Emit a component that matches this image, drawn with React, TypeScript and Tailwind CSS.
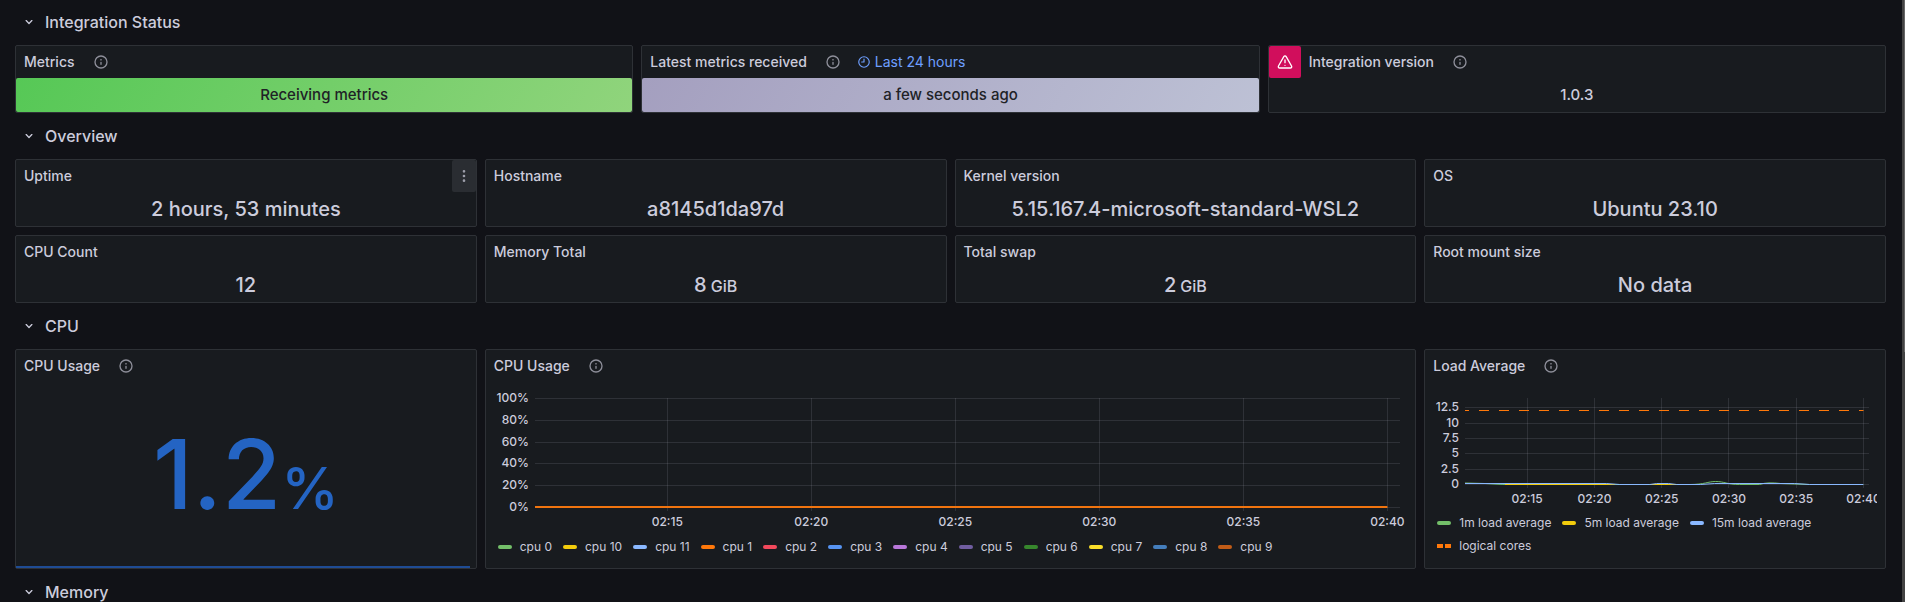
import React from "react";

const GRID = "rgba(204,204,220,0.13)";

function InfoIcon({ className = "" }: { className?: string }) {
  return (
    <svg viewBox="0 0 24 24" className={"h-4 w-4 shrink-0 fill-current " + className} aria-hidden="true">
      <path d="M12,2A10,10,0,1,0,22,12,10.01114,10.01114,0,0,0,12,2Zm0,18a8,8,0,1,1,8-8A8.00917,8.00917,0,0,1,12,20Zm0-8.5a1,1,0,0,0-1,1v3a1,1,0,0,0,2,0v-3A1,1,0,0,0,12,11.5Zm0-4a1.25,1.25,0,1,0,1.25,1.25A1.25,1.25,0,0,0,12,7.5Z" />
    </svg>
  );
}

function Row({ title }: { title: string }) {
  return (
    <h2 className="flex h-[30px] shrink-0 items-center">
      <button type="button" className="flex items-center gap-2 pl-1.5 text-base leading-6 font-medium text-[#ccccdc]">
        <svg viewBox="0 0 24 24" className="h-4 w-4 fill-current" aria-hidden="true">
          <path d="M17,9.17a1,1,0,0,0-1.41,0L12,12.71,8.46,9.17a1,1,0,0,0-1.41,0,1,1,0,0,0,0,1.42l4.24,4.24a1,1,0,0,0,1.42,0L17,10.59A1,1,0,0,0,17,9.17Z" />
        </svg>
        {title}
      </button>
    </h2>
  );
}

type PanelProps = {
  title: string;
  info?: boolean;
  range?: string;
  alert?: boolean;
  menu?: boolean;
  className?: string;
  children: React.ReactNode;
};

function Panel({ title, info, range, alert, menu, className = "", children }: PanelProps) {
  return (
    <section className={"flex min-w-0 flex-col rounded-xs border border-[#2e3136] bg-[#181b1f] " + className}>
      <header className="flex h-8 shrink-0 items-center">
        {alert && (
          <button type="button" aria-label="Panel error" className="flex h-8 w-8 items-center justify-center rounded-xs bg-[#d10e5c] text-white">
            <svg viewBox="0 0 24 24" className="h-4 w-4 fill-current" aria-hidden="true">
              <path d="M12,16a1,1,0,1,0,1,1A1,1,0,0,0,12,16Zm10.67,1.47-8.05-14a3,3,0,0,0-5.24,0l-8,14A3,3,0,0,0,3.94,22H20.06a3,3,0,0,0,2.61-4.53Zm-1.73,2a1,1,0,0,1-.88.51H3.94a1,1,0,0,1-.88-.51,1,1,0,0,1,0-1l8-14a1,1,0,0,1,1.78,0l8.05,14A1,1,0,0,1,20.94,19.49ZM12,8a1,1,0,0,0-1,1v4a1,1,0,0,0,2,0V9A1,1,0,0,0,12,8Z" />
            </svg>
          </button>
        )}
        <h3 className="pl-2 text-sm leading-[22px] font-medium text-[#ccccdc]">{title}</h3>
        {info && (
          <button type="button" aria-label={title + " description"} className="ml-2.5 flex h-8 w-8 items-center justify-center text-[#8e8f9a]">
            <InfoIcon />
          </button>
        )}
        {range && (
          <button type="button" className="flex items-center gap-1 pl-2 text-sm leading-[22px] text-[#6e9fff]">
            <svg viewBox="0 0 24 24" className="h-3.5 w-3.5 fill-current" aria-hidden="true">
              <path d="M12,2A10,10,0,1,0,22,12,10.01177,10.01177,0,0,0,12,2Zm0,18a8,8,0,1,1,8-8A8.00917,8.00917,0,0,1,12,20ZM12,6a.99974.99974,0,0,0-1,1v4H8a1,1,0,0,0,0,2h4a.99974.99974,0,0,0,1-1V7A.99974.99974,0,0,0,12,6Z" />
            </svg>
            {range}
          </button>
        )}
        {menu && (
          <button type="button" aria-label={title + " menu"} className="ml-auto flex h-8 w-6 items-center justify-center rounded-xs bg-[#2a2d32] text-[#9d9eaa]">
            <svg viewBox="0 0 24 24" className="h-4 w-4 fill-current" aria-hidden="true">
              <path d="M12,7a2,2,0,1,0-2-2A2,2,0,0,0,12,7Zm0,10a2,2,0,1,0,2,2A2,2,0,0,0,12,17Zm0-7a2,2,0,1,0,2,2A2,2,0,0,0,12,10Z" />
            </svg>
          </button>
        )}
      </header>
      {children}
    </section>
  );
}

function Stat({ title, value, unit, menu }: { title: string; value: string; unit?: string; menu?: boolean }) {
  return (
    <Panel title={title} menu={menu}>
      <p className="flex h-[34px] items-baseline justify-center gap-1 text-xl leading-[34px] font-medium text-[#ccccdc]">
        {value}
        {unit && <span className="text-base">{unit}</span>}
      </p>
    </Panel>
  );
}

type Tick = { at: number; label: string };

function Axes({ xs, ys, bottom }: { xs: Tick[]; ys: Tick[]; bottom: number }) {
  return (
    <>
      <g stroke={GRID} shapeRendering="crispEdges">
        {ys.map((t) => (
          <line key={t.label} x1="0" x2="100%" y1={t.at + 0.5} y2={t.at + 0.5} />
        ))}
        {xs.map((t) => (
          <line key={t.label} x1={t.at + "%"} x2={t.at + "%"} y1="0" y2={bottom + 4} />
        ))}
      </g>
      <g fill="#ccccdc" className="text-xs font-medium">
        {ys.map((t) => (
          <text key={t.label} x="-6" y={t.at + 4} textAnchor="end">{t.label}</text>
        ))}
        {xs.map((t) => (
          <text key={t.label} x={t.at + "%"} y={bottom + 19} textAnchor="middle">{t.label}</text>
        ))}
      </g>
    </>
  );
}

const times = ["02:15", "02:20", "02:25", "02:30", "02:35", "02:40"];
const cpuX = times.map((label, i) => ({ label, at: 15.3 + i * 16.66 }));
const cpuY = ["100%", "80%", "60%", "40%", "20%", "0%"].map((label, i) => ({ label, at: [0, 22, 44, 65, 87, 109][i] }));
const loadX = times.map((label, i) => ({ label, at: 15.4 + i * 16.66 }));
const loadY = ["12.5", "10", "7.5", "5", "2.5", "0"].map((label, i) => ({ label, at: [9, 25, 40, 55, 71, 86][i] }));

function LegendItem({ name, color, dashed }: { name: string; color: string; dashed?: boolean }) {
  return (
    <li className="flex items-center gap-2">
      {dashed ? (
        <span className="flex w-3.5 justify-between">
          <span className="h-1 w-1.5" style={{ background: color }} />
          <span className="h-1 w-1.5" style={{ background: color }} />
        </span>
      ) : (
        <span className="h-1 w-3.5 rounded-full" style={{ background: color }} />
      )}
      <button type="button">{name}</button>
    </li>
  );
}

const cpus: [string, string][] = [
  ["cpu 0", "#73bf69"],
  ["cpu 10", "#f2cc0c"],
  ["cpu 11", "#8ab8ff"],
  ["cpu 1", "#ff780a"],
  ["cpu 2", "#f2495c"],
  ["cpu 3", "#5794f2"],
  ["cpu 4", "#b877d9"],
  ["cpu 5", "#705da0"],
  ["cpu 6", "#37872d"],
  ["cpu 7", "#fade2a"],
  ["cpu 8", "#447ebc"],
  ["cpu 9", "#c15c17"],
];

export default function App() {
  return (
    <div className="flex h-screen overflow-hidden bg-[#111217] font-['Inter',sans-serif] text-[#ccccdc]">
      <main className="flex min-w-0 flex-1 flex-col gap-2 pt-[7px] pr-4 pl-[15px]">
        <Row title="Integration Status" />
        <div className="grid shrink-0 grid-cols-3 gap-2">
          <Panel title="Metrics" info>
            <p className="h-[34px] rounded-xs bg-[linear-gradient(120deg,#56c856,#90d47c)] text-center text-[15px] leading-[34px] font-medium text-[#202226]">Receiving metrics</p>
          </Panel>
          <Panel title="Latest metrics received" info range="Last 24 hours">
            <p className="h-[34px] rounded-xs bg-[linear-gradient(120deg,#a49fbf,#bdc1d5)] text-center text-[15px] leading-[34px] font-medium text-[#202226]">a few seconds ago</p>
          </Panel>
          <Panel title="Integration version" info alert>
            <p className="h-[34px] text-center text-[15px] leading-[34px] font-medium">1.0.3</p>
          </Panel>
        </div>
        <Row title="Overview" />
        <div className="grid shrink-0 grid-cols-4 gap-2">
          <Stat title="Uptime" value="2 hours, 53 minutes" menu />
          <Stat title="Hostname" value="a8145d1da97d" />
          <Stat title="Kernel version" value="5.15.167.4-microsoft-standard-WSL2" />
          <Stat title="OS" value="Ubuntu 23.10" />
          <Stat title="CPU Count" value="12" />
          <Stat title="Memory Total" value="8" unit="GiB" />
          <Stat title="Total swap" value="2" unit="GiB" />
          <Stat title="Root mount size" value="No data" />
        </div>
        <Row title="CPU" />
        <div className="grid shrink-0 grid-cols-4 gap-2">
          <Panel title="CPU Usage" info className="h-[220px]">
            <p className="flex h-[184px] shrink-0 items-baseline justify-center text-8xl leading-[184px] font-medium text-[#2464c3]">
              1.2<span className="text-[58px] leading-none">%</span>
            </p>
            <div className="mr-1.5 h-0.5 shrink-0 bg-[#1f4c94]" />
          </Panel>
          <Panel title="CPU Usage" info className="col-span-2 h-[220px]">
            <div className="h-[154px] shrink-0 overflow-hidden pt-4 pr-4 pl-[49px]">
              <svg className="block h-[134px] w-full overflow-visible" role="img" aria-label="CPU usage per core">
                <Axes xs={cpuX} ys={cpuY} bottom={109} />
                <line x1="0" x2="98.6%" y1="109" y2="109" stroke="#f0740f" strokeWidth="2" />
              </svg>
            </div>
            <ul className="flex gap-x-[11px] pl-3 text-xs leading-[22px]">
              {cpus.map(([name, color]) => (
                <LegendItem key={name} name={name} color={color} />
              ))}
            </ul>
          </Panel>
          <Panel title="Load Average" info className="h-[220px]">
            <div className="mr-2 h-[130px] shrink-0 overflow-hidden pt-4 pr-2 pl-10">
              <svg className="block h-[110px] w-full overflow-visible" role="img" aria-label="Load average">
                <Axes xs={loadX} ys={loadY} bottom={86} />
                <line x1="0" x2="98.7%" y1="12.5" y2="12.5" stroke="#ff780a" strokeDasharray="10 10" strokeDashoffset="6" />
                <svg x="0" y="80" width="98.7%" height="10" viewBox="0 0 399 10" preserveAspectRatio="none" fill="none">
                  <path d="M0 5 L20 5.5 L38 6.5 H225 C240 6.5 243 3.5 251 3.5 C260 3.5 262 6.5 275 6.5 H295 C300 4.5 308 4.5 316 5.5 L345 6.5 H399" stroke="#73bf69" />
                  <path d="M40 6.5 H150 M185 6.5 L200 6.5 L212 6.5" stroke="#f2cc0c" />
                  <path d="M0 5.5 H142 L155 6.5 H185 L192 5.5 H204 L212 6.5 H236 L250 5.5 H330 L345 6.5 H399" stroke="#8ab8ff" />
                </svg>
              </svg>
            </div>
            <ul className="flex flex-wrap gap-x-[11px] gap-y-px pl-3 text-xs leading-[22px]">
              <LegendItem name="1m load average" color="#73bf69" />
              <LegendItem name="5m load average" color="#f2cc0c" />
              <LegendItem name="15m load average" color="#8ab8ff" />
              <LegendItem name="logical cores" color="#ff780a" dashed />
            </ul>
          </Panel>
        </div>
        <Row title="Memory" />
      </main>
      <div className="flex w-[3px] shrink-0 justify-end bg-[#434343]">
        <div className="h-[352px] w-px bg-[#686868]" />
      </div>
    </div>
  );
}
